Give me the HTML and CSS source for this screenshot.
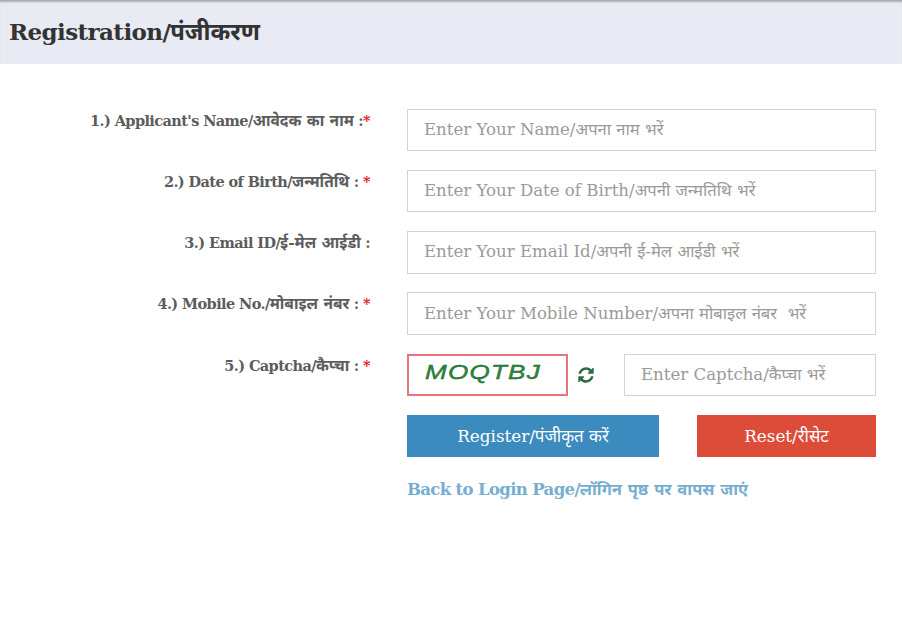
FILE: index.html
```html
<!DOCTYPE html>
<html lang="en">
<head>
  <meta charset="UTF-8" />
  <meta name="viewport" content="width=device-width, initial-scale=1" />
  <title>Registration</title>
  <link rel="stylesheet" href="styles.css">
</head>
<body>

  <header class="page-title">
    <h1>Registration/<span class="hi">पंजीकरण</span></h1>
  </header>

  <form class="reg-form">
    <label class="field-label" for="name">1.) Applicant's Name/<span class="hi">आवेदक का नाम</span> :<span class="req">*</span></label>
    <input class="field-input" id="name" type="text" placeholder="Enter Your Name/अपना नाम भरें" />

    <label class="field-label" for="dob">2.) Date of Birth/<span class="hi">जन्मतिथि</span> : <span class="req">*</span></label>
    <input class="field-input" id="dob" type="text" placeholder="Enter Your Date of Birth/अपनी जन्मतिथि भरें" />

    <label class="field-label" for="email">3.) Email ID/<span class="hi">ई-मेल आईडी</span> :</label>
    <input class="field-input" id="email" type="text" placeholder="Enter Your Email Id/अपनी ई-मेल आईडी भरें" />

    <label class="field-label" for="mobile">4.) Mobile No./<span class="hi">मोबाइल नंबर</span> : <span class="req">*</span></label>
    <input class="field-input" id="mobile" type="text" placeholder="Enter Your Mobile Number/अपना मोबाइल नंबर  भरें" />

    <label class="field-label" for="captcha">5.) Captcha/<span class="hi">कैप्चा</span> : <span class="req">*</span></label>
    <div class="captcha-row">
      <div class="captcha-img"><span>MOQTBJ</span></div>
      <svg class="refresh" viewBox="0 0 1792 1792" aria-hidden="true">
        <path d="M1639 1056q0 5-1 7-64 268-268 434.5t-478 166.5q-146 0-282.5-55t-243.5-157l-129 129q-19 19-45 19t-45-19-19-45v-448q0-26 19-45t45-19h448q26 0 45 19t19 45-19 45l-137 137q71 66 161 102t187 36q134 0 250-65t186-179q11-17 53-117 8-23 30-23h192q13 0 22.5 9.5t9.5 22.5zm25-800v448q0 26-19 45t-45 19h-448q-26 0-45-19t-19-45 19-45l138-138q-148-137-349-137-134 0-250 65t-186 179q-11 17-53 117-8 23-30 23h-199q-13 0-22.5-9.5t-9.5-22.5v-7q65-268 270-434.5t480-166.5q146 0 284 55.5t245 156.5l130-129q19-19 45-19t45 19 19 45z"/>
      </svg>
      <input class="field-input captcha-input" id="captcha" type="text" placeholder="Enter Captcha/कैप्चा भरें" />
    </div>

    <div class="buttons">
      <button class="btn btn-register" type="button">Register/पंजीकृत करें</button>
      <button class="btn btn-reset" type="reset">Reset/रीसेट</button>
    </div>

    <a class="back-link" href="#">Back to Login Page/<span class="hi">लॉगिन पृष्ठ पर वापस जाएं</span></a>
  </form>

</body>
</html>
```

FILE: styles.css
```css
/* Reset */
* {
  box-sizing: border-box;
  margin: 0;
  padding: 0;
}
body {
  font-family: 'DejaVu Serif', 'Noto Sans', serif;
  background: #fff;
  color: #555;
  min-height: 100vh;
  overflow: hidden;
}

/* Devanagari runs sit a little larger than the latin next to them */
.hi {
  letter-spacing: 0;
}

.page-title {
  height: 64px;
  background: #e8ebf3;
  box-shadow: inset 0 3px 2px -1px #a9abb3;
  padding: 0 0 3px 9px;
  display: flex;
  align-items: center;
}
.page-title h1 {
  font-size: 23px;
  font-weight: 700;
  letter-spacing: -0.6px;
  color: #333;
}
.page-title .hi {
  font-size: 23.8px;
}

.reg-form {
  display: grid;
  grid-template-columns: 370px 469px;
  column-gap: 37px;
  row-gap: 18.85px;
  padding-top: 45px;
}
.field-label {
  font-size: 14.5px;
  font-weight: 700;
  letter-spacing: -0.6px;
  text-align: right;
  color: #5c5c5c;
}
.field-label .hi {
  font-size: 15.5px;
}
.req {
  color: #e01b1b;
}

.field-input {
  height: 42.3px;
  width: 100%;
  border: 1px solid #d3d3d3;
  padding: 0 16px 1px;
  font-family: inherit;
  font-size: 16.6px;
  color: #555;
  outline: none;
}
.field-input::placeholder {
  color: #9a9a9a;
  opacity: 1;
}

.captcha-row {
  display: flex;
  align-items: center;
}
.captcha-img {
  width: 161px;
  height: 42px;
  border: 2px solid #e8757c;
  display: flex;
  padding: 4px 0 0 16px;
  overflow: hidden;
}
.captcha-img span {
  font-family: 'Liberation Sans', sans-serif;
  font-style: italic;
  font-size: 21px;
  line-height: 24px;
  color: #2a8a3c;
  -webkit-text-stroke: 0.4px #1d5a2b;
  letter-spacing: 1px;
  white-space: nowrap;
  transform: scaleX(1.24);
  transform-origin: left center;
}
.refresh {
  width: 18px;
  height: 18px;
  margin-left: 9px;
  fill: #2b6b3c;
  flex: none;
}
.captcha-input {
  width: 252px;
  margin-left: 29px;
}

.buttons {
  grid-column: 2;
  display: flex;
  justify-content: space-between;
}
.btn {
  height: 42px;
  border: none;
  color: #fff;
  font-family: inherit;
  font-size: 16.8px;
  cursor: pointer;
}
.btn-register {
  width: 252px;
  background: #3b8bbe;
}
.btn-reset {
  width: 179px;
  background: #dd4b39;
}

.back-link {
  grid-column: 2;
  margin-top: 1px;
  font-size: 16.5px;
  font-weight: 700;
  letter-spacing: -0.65px;
  color: #76aed0;
  text-decoration: none;
}
```
